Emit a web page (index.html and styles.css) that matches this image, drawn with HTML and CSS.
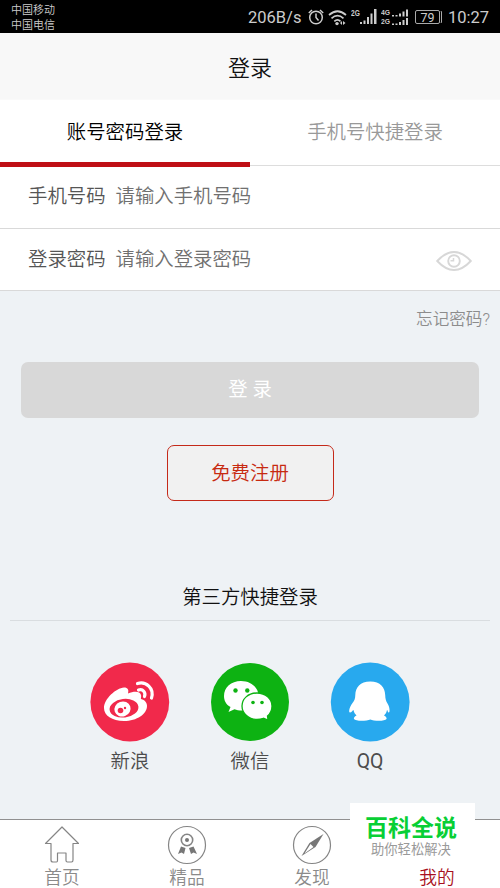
FILE: index.html
```html
<!DOCTYPE html>
<html lang="zh-CN">
<head>
<meta charset="utf-8">
<title>登录</title>
<link rel="stylesheet" href="styles.css">
</head>
<body>
<div class="status">
  <div class="carriers"><span>中国移动</span><span>中国电信</span></div>
  <div class="indicators">
    <span class="speed">206B/s</span>
    <svg class="alarm" width="16" height="18" viewBox="0 0 16 18"><g fill="none" stroke="#ccc" stroke-width="1.500"><circle cx="8" cy="9.500" r="6.300"/><path d="M8 5.500V9.500l2.500 3M.8 5L4 2M15.200 5L12 2"/></g></svg>
    <svg class="wifi" width="19" height="17" viewBox="0 0 19 17"><g fill="none" stroke="#ccc" stroke-width="1.700"><path d="M1 6Q9.500-1.500 18 6M3.500 9.300Q9.500 4 15.500 9.300M6.300 12.300Q9.500 9.500 12.500 12.300"/></g><circle cx="9" cy="14.600" r="1.700" fill="#ccc"/><path d="M12 14l2-2v4zM15 12v4l2.500-2z" fill="#ccc"/></svg>
    <span class="gen">2G</span>
    <svg class="signal" width="18" height="16" viewBox="0 0 18 16" fill="#ccc"><path d="M0 13h2v2H0zM3.500 11.500h2V15h-2zM7 8h2v7H7zM10.500 4.500h2V15h-2zM14 0h2.500v15H14z"/></svg>
    <span class="gen double"><span>4G</span><span>2G</span></span>
    <svg class="signals" width="17" height="17" viewBox="0 0 17 17" fill="#ccc"><path d="M0 6h2v1.500H0zM3.500 6h2v1.500h-2zM7 4.500h2v3H7zM10.500 2.500h2v5h-2zM14 .5h2v7h-2zM0 14.500h2V16H0zM3.500 14.500h2V16h-2zM7 13h2v3H7zM10.500 11h2v5h-2zM14 9h2v7h-2z"/></svg>
    <span class="battery">79</span>
    <span class="time">10:27</span>
  </div>
</div>
<header class="header">登录</header>
<div class="tabs"><div class="tab active">账号密码登录</div><div class="tab">手机号快捷登录</div></div>
<div class="row phone"><span class="label">手机号码</span><span class="hint">请输入手机号码</span></div>
<div class="row"><span class="label">登录密码</span><span class="hint">请输入登录密码</span>
  <svg class="eye" width="36" height="20" viewBox="0 0 36 20"><g fill="none" stroke="#d7d7d7" stroke-width="1.900"><path d="M1.200 10Q18-8 34.800 10Q18 28 1.200 10z"/><circle cx="18" cy="10" r="5.800"/><path d="M14.500 9.800h3V7" stroke-width="1.500"/></g></svg>
</div>
<main class="body">
  <div class="forgot">忘记密码?</div>
  <div class="login">登 录</div>
  <div class="register">免费注册</div>
  <div class="third">第三方快捷登录</div>
  <div class="socials">
    <div class="social">
      <svg width="80" height="80" viewBox="0 0 80 80"><circle cx="39.800" cy="40" r="39.400" fill="#f1294b"/><path d="M14 46C14 37 26 26 34 25.500C38 25.500 39 28 38 31.500C44 29 50 29 51 33C51.500 35 50.500 36 51 37C55 38 57 41 57 44C57 52 47 59 34 59C22 59 14 53.500 14 46z" fill="#fff"/><ellipse cx="34" cy="46.200" rx="14.500" ry="9.300" transform="rotate(-7 34 46.200)" fill="#f1294b"/><ellipse cx="32.500" cy="47" rx="8.200" ry="7.400" transform="rotate(-20 32.500 47)" fill="#fff"/><circle cx="30.500" cy="48.500" r="2.800" fill="#f1294b"/><circle cx="35" cy="46" r="1.200" fill="#f1294b"/><path d="M47.500 21.500C56 19 64.500 26 61.500 36M48.500 28C53 26.500 56 30.500 54.500 34.500" fill="none" stroke="#fff" stroke-width="3.200" stroke-linecap="round"/></svg>
      <span>新浪</span>
    </div>
    <div class="social">
      <svg width="80" height="80" viewBox="0 0 80 80"><circle cx="40" cy="40" r="39" fill="#0db212"/><path d="M31 19C21 19 14 25.500 14 34C14 38.700 16 42.500 20.500 45L18.500 50L24.500 47.200C26.500 48 29 48.500 32 48.500C42 48.500 48.500 42 48.500 34C48.500 25.500 41 19 31 19z" fill="#fff"/><path d="M47 31C38 31 32 37 32 44C32 51.500 39 57.500 47 57.500C49.500 57.500 51.500 57 53.500 56.300L58 58L57.500 54C60.500 51.500 62 48 62 44C62 37 55.500 31 47 31z" fill="#fff" stroke="#0db212" stroke-width="1.300"/><g fill="#0db212"><circle cx="25.500" cy="28.500" r="2.200"/><circle cx="37.300" cy="28.500" r="2.200"/><circle cx="43" cy="40.500" r="1.800"/><circle cx="52" cy="40.500" r="1.800"/></g></svg>
      <span>微信</span>
    </div>
    <div class="social">
      <svg width="80" height="80" viewBox="0 0 80 80"><circle cx="40.200" cy="40" r="39.400" fill="#28a9ee"/><path d="M40.300 19.500C30 19.500 25.500 25.500 25.300 33C25.200 37 24.500 38.500 22.500 41C19 45.500 18.500 50.500 20 50.500C21.500 50.500 22.500 48.500 23.500 48C24 50.500 25 52 26.500 53.500C24.500 54.500 23.500 56 24 57C25.500 59.500 37 59 40.300 57.500C43.500 59 55 59.500 56.500 57C57 56 56 54.500 54 53.500C55.500 52 56.500 50.500 57 48C58 48.500 57.500 50.500 58.800 50.500C60 50.500 60 45.500 57.500 41.500C56 39 55.300 37 55.200 33C55 25.500 50.500 19.500 40.300 19.500z" fill="#fff"/></svg>
      <span class="latin">QQ</span>
    </div>
  </div>
</main>
<nav class="nav">
  <div class="item"><svg width="40" height="40" viewBox="0 0 40 40"><path d="M20 2L3.500 18.500H9V35Q9 37 11 37H14.500Q15.500 37 15.500 35.500V28H24V35.500Q24 37 25.500 37H29.500Q31 37 31 35V18.500H36.500z" fill="none" stroke="#858585" stroke-width="1.200" stroke-linejoin="round"/></svg><span>首页</span></div>
  <div class="item"><svg width="40" height="40" viewBox="0 0 40 40"><g fill="none" stroke="#858585"><circle cx="20" cy="20" r="18.500" stroke-width="1.200"/><circle cx="20" cy="15" r="5.700" stroke-width="1.600"/></g><g fill="#777"><circle cx="20" cy="15" r="2"/><path d="M14 21.500L18.500 23L17 29L14.500 27.500L11 29zM22 23L26.500 21.500L30 29L26.500 27.500L24 29z"/></g></svg><span>精品</span></div>
  <div class="item"><svg width="40" height="40" viewBox="0 0 40 40"><circle cx="20" cy="20" r="18.500" fill="none" stroke="#858585" stroke-width="1.200"/><path d="M31.500 9L23.500 22L9.500 31L17.500 18z" fill="#777"/><path d="M12.500 28.500L18.500 19L21.500 22z" fill="#fff"/></svg><span>发现</span></div>
  <div class="item current"><span>我的</span></div>
</nav>
<div class="watermark"><strong>百科全说</strong><span>助你轻松解决</span></div>
</body>
</html>
```
FILE: styles.css
```css
* { box-sizing: border-box; }
body {
  margin: 0;
  width: 500px;
  height: 888px;
  overflow: hidden;
  position: relative;
  background: #eef2f5;
  font-family: Roboto, "Noto Sans CJK SC", sans-serif;
  font-weight: 350;
  font-size: 19.4px;
  line-height: 24px;
  color: #555;
}
svg { display: block; flex: none; }
.status {
  height: 33px;
  background: #000;
  color: #ccc;
  display: flex;
  justify-content: space-between;
  padding: 0 11px;
}
.carriers {
  display: flex;
  flex-direction: column;
  font-size: 11px;
  line-height: 15px;
  padding-top: 3px;
}
.indicators {
  display: flex;
  align-items: center;
  font-weight: 400;
  font-size: 16.5px;
  height: 34px;
}
.speed { width: 54px; white-space: nowrap; margin-top: 1px; }
.alarm { margin-left: 6px; }
.wifi { margin-left: 4px; }
.gen {
  align-self: flex-start;
  margin: 8px 0 0 4px;
  width: 9px;
  font: bold 9.5px/9px "Liberation Sans", sans-serif;
  transform: scaleX(.7);
  transform-origin: left;
}
.double {
  display: flex;
  flex-direction: column;
  margin-left: 3px;
  width: 10px;
  font-size: 8px;
  transform: scaleX(.85);
}
.signals { margin-left: 1px; }
.battery {
  width: 25px;
  height: 14px;
  margin-left: 6px;
  border: 1px solid #aaa;
  border-radius: 2px;
  font-size: 12.5px;
  line-height: 13px;
  text-align: center;
  box-shadow: 2px 0 0 -1px #000, 3px 0 0 -1px #aaa;
}
.time { margin: 1px 0 0 8px; width: 41px; white-space: nowrap; }
.header {
  height: 67px;
  background: #f8f8f8;
  border-bottom: 1px solid #fafafa;
  color: #111;
  font-size: 22px;
  line-height: 71px;
  text-align: center;
}
.tabs { display: flex; height: 67px; background: #fff; }
.tab {
  flex: 1;
  height: 66px;
  border-bottom: 1px solid #ddd;
  text-align: center;
  line-height: 66px;
  color: #999;
}
.tab.active { height: 67px; border-bottom: 5px solid #bf0f15; color: #000; }
.row {
  height: 62px;
  background: #fff;
  border-bottom: 1px solid #d9d9d9;
  padding: 0 28px;
  display: flex;
  align-items: center;
  line-height: 58px;
}
.row.phone { padding-bottom: 2px; }
.label { width: 87.5px; }
.hint { color: #707070; }
.eye { margin: 2px 0 0 auto; }
.body {
  height: 528px;
  display: flex;
  flex-direction: column;
}
.forgot {
  padding: 17px 10px 0;
  text-align: right;
  color: #8c8c8c;
  font-size: 16.6px;
}
.login {
  height: 56px;
  margin: 30px 21px 0;
  border-radius: 7px;
  background: #d8d8d8;
  color: #fff;
  font-weight: 400;
  line-height: 55px;
  text-align: center;
}
.register {
  align-self: center;
  width: 167px;
  height: 56px;
  margin-top: 27px;
  border: 1px solid #c42a1a;
  border-radius: 7px;
  background: #f1f1f1;
  color: #c72a10;
  line-height: 55px;
  text-align: center;
}
.third {
  height: 35px;
  margin: 85px 10px 0;
  border-bottom: 1px solid #d9dde0;
  text-align: center;
  color: #111;
}
.socials { display: flex; justify-content: center; gap: 40px; margin-top: 41px; }
.social { width: 80px; display: flex; flex-direction: column; align-items: center; gap: 8px; color: #4c4c4c; }
.latin { font-weight: 400; }
.nav {
  height: 69px;
  background: #fff;
  border-top: 1px solid #909090;
  display: flex;
  color: #8a8a8a;
  font-size: 17.7px;
}
.item {
  flex: 1;
  display: flex;
  flex-direction: column;
  align-items: center;
  justify-content: flex-end;
  line-height: 23px;
  padding-right: 1px;
}
.item svg { margin-bottom: 2px; }
.item span { margin-bottom: -2px; }
.current { color: #a80f20; }
.watermark {
  position: absolute;
  left: 350px;
  top: 803px;
  width: 125px;
  height: 60px;
  background: #fff;
  display: flex;
  flex-direction: column;
  padding-left: 15px;
}
.watermark strong { font-size: 23px; font-weight: 700; line-height: 28px; margin-top: 12px; color: #08cf35; white-space: nowrap; }
.watermark span { font-size: 13.3px; line-height: 15px; margin-top: -1px; padding-left: 6px; color: #999; font-weight: 400; white-space: nowrap; }
```
